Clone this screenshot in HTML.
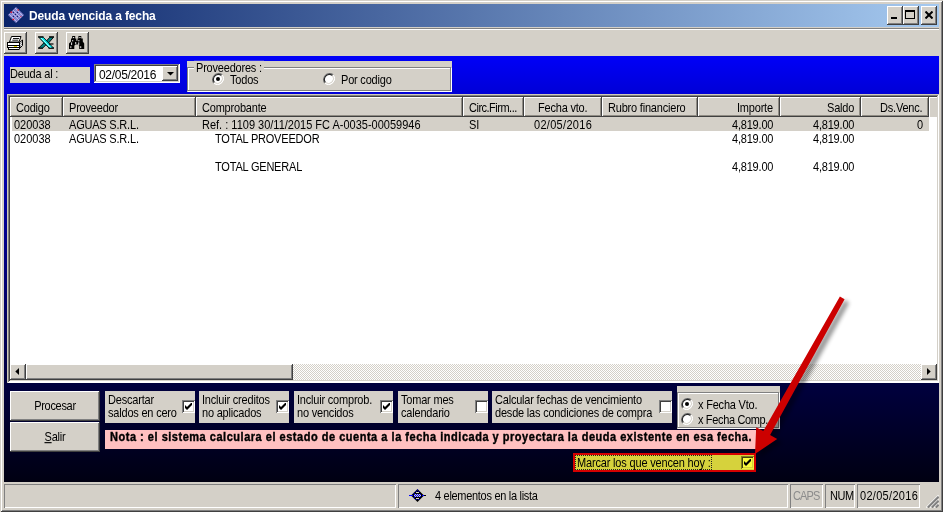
<!DOCTYPE html>
<html lang="es">
<head>
<meta charset="utf-8">
<title>Deuda vencida a fecha</title>
<style>
html,body{margin:0;padding:0;}
body{width:943px;height:512px;overflow:hidden;background:#d4d0c8;position:relative;
  font-family:"Liberation Sans",sans-serif;font-size:11px;color:#000;line-height:13px;letter-spacing:-0.2px;}
.n{letter-spacing:0;}
div,span{box-sizing:border-box;}
.a{position:absolute;}
.t{position:absolute;white-space:nowrap;will-change:transform;transform:scaleY(1.12);transform-origin:0 10.2px;}
.raised{background:#d4d0c8;box-shadow:inset -1px -1px 0 #404040,inset 1px 1px 0 #fff,inset -2px -2px 0 #808080,inset 2px 2px 0 #d4d0c8;}
.sunken{box-shadow:inset -1px -1px 0 #fff,inset 1px 1px 0 #808080,inset -2px -2px 0 #d4d0c8,inset 2px 2px 0 #404040;}
.hdr{position:absolute;top:97px;height:20px;background:#d4d0c8;box-shadow:inset -1px -1px 0 #404040,inset 1px 1px 0 #fff,inset -2px -2px 0 #908c84;}
.hdr span{position:absolute;top:5px;white-space:nowrap;will-change:transform;transform:scaleY(1.12);transform-origin:0 10.2px;}
.panel{position:absolute;top:391px;height:32px;background:#d4d0c8;}
.panel .t{left:3px;}
.cb{position:absolute;width:13px;height:13px;background:#fff;box-shadow:inset 1px 1px 0 #808080,inset -1px -1px 0 #fff,inset 2px 2px 0 #404040,inset -2px -2px 0 #d4d0c8;}
.cb svg{position:absolute;left:3px;top:3px;}
.rd{position:absolute;width:12px;height:12px;}
.sp{position:absolute;top:484px;height:24px;box-shadow:inset 1px 1px 0 #808080,inset -1px -1px 0 #fff;}
</style>
</head>
<body>
<!-- window frame -->
<div class="a" style="left:0;top:0;width:943px;height:512px;box-shadow:inset 1px 1px 0 #d4d0c8,inset -1px -1px 0 #404040,inset 2px 2px 0 #fff,inset -2px -2px 0 #808080;"></div>

<!-- title bar -->
<div class="a" id="title" style="left:4px;top:4px;width:935px;height:23px;background:linear-gradient(to right,#0a246a 0%,#a6caf0 100%);"></div>
<svg class="a" style="left:8px;top:7px" width="16" height="16" viewBox="0 0 16 16">
  <polygon points="8,0 16,8 8,16 0,8" fill="#8a8ad2"/>
  <path d="M5 3l8 8M3 5l8 8M7 1l8 8M1 7l8 8" stroke="#b9b9ea" stroke-width="1"/>
  <path d="M11 3l-8 8M13 5l-8 8M9 1l-8 8M15 7l-8 8" stroke="#6a6ac0" stroke-width="0.8" opacity="0.7"/>
  <rect x="5" y="5" width="1" height="1" fill="#1a1a6a"/><rect x="9" y="5" width="1" height="1" fill="#1a1a6a"/><rect x="7" y="7" width="1" height="1" fill="#1a1a6a"/><rect x="5" y="9" width="1" height="1" fill="#1a1a6a"/><rect x="9" y="9" width="1" height="1" fill="#1a1a6a"/>
  <rect x="2.5" y="4.5" width="1.6" height="1.4" fill="#f01020"/><rect x="9.5" y="2.3" width="1.5" height="1.4" fill="#e03040"/>
  <rect x="4.5" y="11.8" width="1.6" height="1.4" fill="#f01020"/><rect x="12.2" y="9" width="1.2" height="1.2" fill="#d04060"/>
</svg>
<div class="t" id="ttext" style="transform:none;left:29px;top:9px;color:#fff;font-weight:bold;font-size:12px;line-height:14px;letter-spacing:-0.13px;">Deuda vencida a fecha</div>

<!-- caption buttons -->
<div class="a raised" style="left:887px;top:6px;width:16px;height:19px;"></div>
<div class="a" style="left:891px;top:17px;width:6px;height:2px;background:#000;"></div>
<div class="a raised" style="left:903px;top:6px;width:16px;height:19px;"></div>
<div class="a" style="left:905px;top:10px;width:10px;height:9px;border:1px solid #000;border-top-width:2px;"></div>
<div class="a raised" style="left:921px;top:6px;width:16px;height:19px;"></div>
<svg class="a" style="left:925px;top:11px" width="8" height="8" viewBox="0 0 8 8"><path d="M0.5 0.5L7.5 7.5M7.5 0.5L0.5 7.5" stroke="#000" stroke-width="2"/></svg>

<!-- toolbar -->
<div class="a" style="left:4px;top:28px;width:935px;height:1px;background:#808080;"></div>
<div class="a" style="left:4px;top:29px;width:935px;height:1px;background:#fff;"></div>
<div class="a raised" id="tb1" style="left:4px;top:32px;width:23px;height:22px;"></div>
<svg class="a" style="left:7px;top:35px" width="16" height="16" viewBox="0 0 16 16">
  <polygon points="4.5,1.5 14,1.5 12,7 2.5,7" fill="#fff" stroke="#000" stroke-width="1"/>
  <path d="M6 3.5h6M5.3 5.2h6" stroke="#000" stroke-width="0.9"/>
  <polygon points="12.5,7.5 15.5,5 15.5,10.5 12.5,13.5" fill="#e8e8e8" stroke="#000" stroke-width="1"/>
  <path d="M13.5 8.5l1-1M13.5 10.5l1-1M13.5 12l1-1" stroke="#000" stroke-width="0.7"/>
  <rect x="0.5" y="7.5" width="12" height="5" fill="#fff" stroke="#000" stroke-width="1"/>
  <path d="M0.5 10.5h12" stroke="#000" stroke-width="1"/>
  <rect x="1.5" y="12.5" width="10.5" height="2" fill="#fff" stroke="#000" stroke-width="1"/>
  <rect x="6.8" y="11" width="3.2" height="1" fill="#f0e000"/>
</svg>
<div class="a raised" id="tb2" style="left:35px;top:32px;width:23px;height:22px;"></div>
<svg class="a" style="left:38px;top:36px" width="17" height="14" viewBox="0 0 17 14">
  <path d="M0 0.8h5.5M11 0.8h5M0 12.2h5M10.5 12.2h5.5" stroke="#000" stroke-width="1.3"/>
  <polygon points="15.5,1.3 11.8,1.3 8.3,5 10.3,7.3" fill="#008080" stroke="#000" stroke-width="0.9"/>
  <polygon points="0.8,12 4.8,12 8.2,8.6 6.2,6.6" fill="#008080" stroke="#000" stroke-width="0.9"/>
  <polygon points="0.8,1.3 5.3,1.3 15.5,12 11,12" fill="#00e8e8" stroke="#000" stroke-width="0.9"/>
  <path d="M3 2l9.5 9.6" stroke="#c0ffff" stroke-width="0.9"/>
  <path d="M11 8h4.5" stroke="#000" stroke-width="1.2"/>
</svg>
<div class="a raised" id="tb3" style="left:66px;top:32px;width:23px;height:22px;"></div>
<svg class="a" style="left:69px;top:36px" width="16" height="13" viewBox="0 0 16 13">
  <path d="M3.2,0H6.2V2.6H7.3V4.7H8.5V2.6H9.4V0H12.3V2.6H13.8V5.6L15.2,7.5V12.9H10.2V9.7L9,8.5H6.5L5.3,9.7V12.9H0V7.5L2,5.6V2.6H3.2Z" fill="#000"/>
  <rect x="4.1" y="1" width="1.1" height="1.1" fill="#fff"/><rect x="10.4" y="1" width="1.1" height="1.1" fill="#fff"/>
  <rect x="3.1" y="4.2" width="1.1" height="1.1" fill="#fff"/><rect x="9.3" y="4.2" width="1.1" height="1.1" fill="#fff"/>
  <rect x="2.2" y="6.4" width="0.9" height="2.7" fill="#fff"/><rect x="9.3" y="6.4" width="0.9" height="2.7" fill="#fff"/>
  <rect x="6.3" y="6" width="0.9" height="2.1" fill="#fff"/>
  <rect x="1.4" y="10.2" width="0.9" height="1.9" fill="#fff"/><rect x="11.3" y="10.2" width="0.9" height="1.9" fill="#fff"/>
</svg>

<!-- form background -->
<div class="a" id="form" style="left:4px;top:56px;width:935px;height:426px;background:linear-gradient(to bottom,#0000f8 0%,#0000d6 9%,#00003e 77%,#000012 100%);"></div>

<!-- TOPCONTROLS -->
<div class="a" style="left:10px;top:67px;width:80px;height:16px;background:#d4d0c8;"></div>
<div class="t" style="left:10px;top:68px;">Deuda al :</div>
<div class="a sunken" style="left:94px;top:64px;width:86px;height:19px;background:#fff;"></div>
<div class="t" style="transform:none;left:98.5px;top:68px;font-size:12px;line-height:14px;letter-spacing:-0.3px;">02/05/2016</div>
<div class="a raised" style="left:162px;top:66px;width:16px;height:15px;"></div>
<svg class="a" style="left:167px;top:72px" width="7" height="4" viewBox="0 0 7 4"><polygon points="0,0 7,0 3.5,3.5" fill="#000"/></svg>
<div class="a" style="left:187px;top:61px;width:265px;height:31px;background:#d4d0c8;"></div>
<div class="a" style="left:187px;top:67px;width:264px;height:24px;border:1px solid #808080;box-shadow:inset 1px 1px 0 #fff,1px 1px 0 #fff;"></div>
<div class="t" style="left:194px;top:62px;background:#d4d0c8;padding:0 2px;">Proveedores :</div>
<svg class="rd" style="left:212px;top:73px" width="12" height="12" viewBox="0 0 12 12"><circle cx="6" cy="6" r="5.5" fill="#fff"/><path d="M1.8 10.2A6 6 0 0 1 10.2 1.8" fill="none" stroke="#707070" stroke-width="1.1"/><path d="M2.5 9.5A5 5 0 0 1 9.5 2.5" fill="none" stroke="#282828" stroke-width="1.15"/><path d="M10.2 1.8A6 6 0 0 1 1.8 10.2" fill="none" stroke="#fff" stroke-width="1"/><path d="M9.5 2.5A5 5 0 0 1 2.5 9.5" fill="none" stroke="#d4d0c8" stroke-width="1"/><circle cx="6" cy="6" r="2" fill="#000"/></svg>
<div class="t" style="left:230px;top:74px;">Todos</div>
<svg class="rd" style="left:323px;top:73px" width="12" height="12" viewBox="0 0 12 12"><circle cx="6" cy="6" r="5.5" fill="#fff"/><path d="M1.8 10.2A6 6 0 0 1 10.2 1.8" fill="none" stroke="#707070" stroke-width="1.1"/><path d="M2.5 9.5A5 5 0 0 1 9.5 2.5" fill="none" stroke="#282828" stroke-width="1.15"/><path d="M10.2 1.8A6 6 0 0 1 1.8 10.2" fill="none" stroke="#fff" stroke-width="1"/><path d="M9.5 2.5A5 5 0 0 1 2.5 9.5" fill="none" stroke="#d4d0c8" stroke-width="1"/></svg>
<div class="t" style="left:341px;top:74px;">Por codigo</div>
<!-- LIST -->
<div class="a" id="list" style="left:7px;top:94px;width:932px;height:289px;background:#fff;box-shadow:inset 1px 1px 0 #cfcbb8,inset -1px -1px 0 #fff,inset 2px 2px 0 #808080,inset -2px -2px 0 #fff,inset 3px 3px 0 #404040,inset -3px -3px 0 #d4d0c8;"></div>
<div class="a" style="left:936px;top:97px;width:1px;height:283px;background:#fff;"></div><div class="a" style="left:937px;top:96px;width:1px;height:285px;background:#d4d0c8;"></div>
<div class="a" style="left:10px;top:97px;width:927px;height:20px;background:#d4d0c8;"></div>
<div class="hdr" style="left:10px;width:53px;"><span style="left:6px">Codigo</span></div>
<div class="hdr" style="left:63px;width:133px;"><span style="left:6px">Proveedor</span></div>
<div class="hdr" style="left:196px;width:267px;"><span style="left:6px">Comprobante</span></div>
<div class="hdr" style="left:463px;width:61px;"><span style="left:6px;letter-spacing:-0.5px">Circ.Firm...</span></div>
<div class="hdr" style="left:524px;width:78px;"><span style="left:14px">Fecha vto.</span></div>
<div class="hdr" style="left:602px;width:96px;"><span style="left:6px">Rubro financiero</span></div>
<div class="hdr" style="left:698px;width:82px;"><span style="right:7px">Importe</span></div>
<div class="hdr" style="left:780px;width:81px;"><span style="right:7px">Saldo</span></div>
<div class="hdr" style="left:861px;width:68px;"><span style="right:7px">Ds.Venc.</span></div>
<div class="hdr" style="left:929px;width:8px;box-shadow:inset 1px 1px 0 #fff;"></div>
<div class="a" style="left:12px;top:117px;width:917px;height:14px;background:#d4d0c8;"></div>
<div class="t n" style="left:14px;top:119px;">020038</div>
<div class="t" style="left:69px;top:119px;">AGUAS S.R.L.</div>
<div class="t n" style="left:202px;top:119px;">Ref. : 1109 30/11/2015 FC A-0035-00059946</div>
<div class="t" style="left:469px;top:119px;">SI</div>
<div class="t" style="left:534px;top:119px;letter-spacing:0.3px">02/05/2016</div>
<div class="t" style="right:170px;top:119px;">4,819.00</div>
<div class="t" style="right:89px;top:119px;">4,819.00</div>
<div class="t n" style="right:20px;top:119px;">0</div>
<div class="t n" style="left:14px;top:133px;">020038</div>
<div class="t" style="left:69px;top:133px;">AGUAS S.R.L.</div>
<div class="t" style="left:215px;top:133px;">TOTAL PROVEEDOR</div>
<div class="t" style="right:170px;top:133px;">4,819.00</div>
<div class="t" style="right:89px;top:133px;">4,819.00</div>
<div class="t" style="left:215px;top:161px;">TOTAL GENERAL</div>
<div class="t" style="right:170px;top:161px;">4,819.00</div>
<div class="t" style="right:89px;top:161px;">4,819.00</div>
<!-- hscroll -->
<div class="a" id="hs" style="left:10px;top:364px;width:927px;height:16px;background:repeating-conic-gradient(#fff 0% 25%,#d4d0c8 0% 50%) 0 0/2px 2px;"></div>
<div class="a raised" style="left:10px;top:364px;width:16px;height:16px;"></div>
<svg class="a" style="left:15px;top:368px" width="4" height="7" viewBox="0 0 4 7"><polygon points="4,0 4,7 0.3,3.5" fill="#000"/></svg>
<div class="a raised" style="left:26px;top:364px;width:267px;height:16px;"></div>
<div class="a raised" style="left:921px;top:364px;width:16px;height:16px;"></div>
<svg class="a" style="left:927px;top:368px" width="4" height="7" viewBox="0 0 4 7"><polygon points="0,0 0,7 3.7,3.5" fill="#000"/></svg>
<!-- BOTTOM -->
<div class="a raised" style="left:10px;top:391px;width:90px;height:30px;"></div>
<div class="t" style="left:10px;top:400px;width:90px;text-align:center;"><span style="letter-spacing:-0.3px">Procesar</span></div>
<div class="a raised" style="left:10px;top:422px;width:90px;height:30px;"></div>
<div class="t" style="left:10px;top:431px;width:90px;text-align:center;"><u>S</u>alir</div>

<div class="panel" style="left:105px;width:90px;"><div class="t" style="top:3px">Descartar</div><div class="t" style="top:16px">saldos en cero</div><div class="cb" style="left:77px;top:9px"><svg width="7" height="7" viewBox="0 0 7 7"><path d="M0 2v3l2 2 5-5v-3l-5 5z" fill="#000"/></svg></div></div>
<div class="panel" style="left:199px;width:90px;"><div class="t" style="top:3px">Incluir creditos</div><div class="t" style="top:16px">no aplicados</div><div class="cb" style="left:77px;top:9px"><svg width="7" height="7" viewBox="0 0 7 7"><path d="M0 2v3l2 2 5-5v-3l-5 5z" fill="#000"/></svg></div></div>
<div class="panel" style="left:294px;width:99px;"><div class="t" style="top:3px">Incluir comprob.</div><div class="t" style="top:16px">no vencidos</div><div class="cb" style="left:86px;top:9px"><svg width="7" height="7" viewBox="0 0 7 7"><path d="M0 2v3l2 2 5-5v-3l-5 5z" fill="#000"/></svg></div></div>
<div class="panel" style="left:398px;width:90px;"><div class="t" style="top:3px">Tomar mes</div><div class="t" style="top:16px">calendario</div><div class="cb" style="left:77px;top:9px"></div></div>
<div class="panel" style="left:492px;width:180px;"><div class="t" style="top:3px">Calcular fechas de vencimiento</div><div class="t" style="top:16px">desde las condiciones de compra</div><div class="cb" style="left:167px;top:9px"></div></div>

<div class="a" style="left:677px;top:386px;width:103px;height:43px;background:#d4d0c8;"></div>
<div class="a" style="left:677px;top:392px;width:102px;height:36px;border:1px solid #808080;box-shadow:inset 1px 1px 0 #fff,1px 1px 0 #fff;"></div>
<svg class="rd" style="left:681px;top:398px" width="12" height="12" viewBox="0 0 12 12"><circle cx="6" cy="6" r="5.5" fill="#fff"/><path d="M1.8 10.2A6 6 0 0 1 10.2 1.8" fill="none" stroke="#707070" stroke-width="1.1"/><path d="M2.5 9.5A5 5 0 0 1 9.5 2.5" fill="none" stroke="#282828" stroke-width="1.15"/><path d="M10.2 1.8A6 6 0 0 1 1.8 10.2" fill="none" stroke="#fff" stroke-width="1"/><path d="M9.5 2.5A5 5 0 0 1 2.5 9.5" fill="none" stroke="#d4d0c8" stroke-width="1"/><circle cx="6" cy="6" r="2" fill="#000"/></svg>
<div class="t" style="left:698px;top:399px;">x Fecha Vto.</div>
<svg class="rd" style="left:681px;top:413px" width="12" height="12" viewBox="0 0 12 12"><circle cx="6" cy="6" r="5.5" fill="#fff"/><path d="M1.8 10.2A6 6 0 0 1 10.2 1.8" fill="none" stroke="#707070" stroke-width="1.1"/><path d="M2.5 9.5A5 5 0 0 1 9.5 2.5" fill="none" stroke="#282828" stroke-width="1.15"/><path d="M10.2 1.8A6 6 0 0 1 1.8 10.2" fill="none" stroke="#fff" stroke-width="1"/><path d="M9.5 2.5A5 5 0 0 1 2.5 9.5" fill="none" stroke="#d4d0c8" stroke-width="1"/></svg>
<div class="t" style="left:698px;top:414px;letter-spacing:-0.35px">x Fecha Comp.</div>

<div class="a" style="left:105px;top:430px;width:651px;height:19px;background:#ffc0c0;"></div>
<div class="t" id="nota" style="left:110px;top:431px;font-weight:bold;font-size:11px;letter-spacing:0.52px;-webkit-text-stroke:0.35px #000;">Nota : el sistema calculara el estado de cuenta a la fecha indicada y proyectara la deuda existente en esa fecha.</div>

<div class="a" style="left:573px;top:453px;width:183px;height:19px;background:#d6d23c;border:2px solid #d40000;"></div>
<div class="a" style="left:575px;top:455px;width:137px;height:15px;border:1px dotted #222;"></div>
<div class="t" style="left:577px;top:457px;letter-spacing:-0.17px">Marcar los que vencen hoy :</div>
<div class="cb" style="left:741px;top:456px;background:#fbfb3c;box-shadow:inset 1px 1px 0 #80801c,inset -1px -1px 0 #f0f03c,inset 2px 2px 0 #404010,inset -2px -2px 0 #d6d23c;"><svg width="7" height="7" viewBox="0 0 7 7"><path d="M0 2v3l2 2 5-5v-3l-5 5z" fill="#000"/></svg></div>
<!-- STATUS -->
<div class="sp" style="left:4px;width:392px;"></div>
<div class="sp" style="left:398px;width:390px;"></div>
<svg class="a" style="left:409px;top:489px" width="18" height="14" viewBox="0 0 18 14">
<path d="M0 6.5h17" stroke="#0000ff" stroke-width="1"/><path d="M14.5 6.5h2.5" stroke="#000" stroke-width="1"/>
<polygon points="8.5,0 15,6.5 8.5,13 2,6.5" fill="#000"/>
<path d="M8.5 0.5v1M6.5 2.5h1M9.5 2.5h1M4.5 4.5h1M4.5 8.5h1M6.5 10.5h1M9.5 10.5h1M2 6.5h2M13 6.5h2" stroke="#0000ff" stroke-width="1"/>
<rect x="5" y="5" width="7" height="3" fill="#0000ff"/>
<path d="M6 5.5h1M8 5.5h1M10 5.5h1M5 6.5h1M7 6.5h1M9 6.5h1M11 6.5h1M6 7.5h1M8 7.5h1M10 7.5h1" stroke="#d4d0c8" stroke-width="1"/>
<path d="M7 3.5h3M7 9.5h3" stroke="#d4d0c8" stroke-width="1"/>
</svg>
<div class="t" style="left:435px;top:490px;letter-spacing:-0.3px">4 elementos en la lista</div>
<div class="sp" style="left:790px;width:33px;"></div>
<div class="t" style="left:793px;top:490px;color:#8c8c8c;letter-spacing:-0.9px">CAPS</div>
<div class="sp" style="left:825px;width:30px;"></div>
<div class="t" style="left:830px;top:490px;letter-spacing:-0.5px">NUM</div>
<div class="sp" style="left:857px;width:63px;"></div>
<div class="t" style="left:860px;top:490px;letter-spacing:0.3px">02/05/2016</div>
<svg class="a" style="left:926px;top:495px" width="13" height="13" viewBox="0 0 13 13"><path d="M12.5 0.3L0.3 12.5M12.5 4.3L4.3 12.5M12.5 8.3L8.3 12.5" stroke="#fff" stroke-width="1.2"/><path d="M12.5 1.8L1.8 12.5M12.5 5.8L5.8 12.5M12.5 9.8L9.8 12.5" stroke="#808080" stroke-width="2"/></svg>
<!-- ARROW -->
<svg class="a" style="left:700px;top:270px;overflow:visible" width="200" height="220" viewBox="700 270 200 220">
<defs><filter id="sh" x="-30%" y="-30%" width="160%" height="160%"><feGaussianBlur stdDeviation="2.2"/></filter></defs>
<g transform="translate(4.5,3.5)" filter="url(#sh)" opacity="0.42"><polygon points="839.9,296.5 844.6,299.2 770.1,435.0 777.2,438.9 755.0,454.0 756.2,427.2 763.3,431.1" fill="#000"/></g>
<polygon points="839.9,296.5 844.6,299.2 770.1,435.0 777.2,438.9 755.0,454.0 756.2,427.2 763.3,431.1" fill="#cc0000"/>
</svg>
</body>
</html>
